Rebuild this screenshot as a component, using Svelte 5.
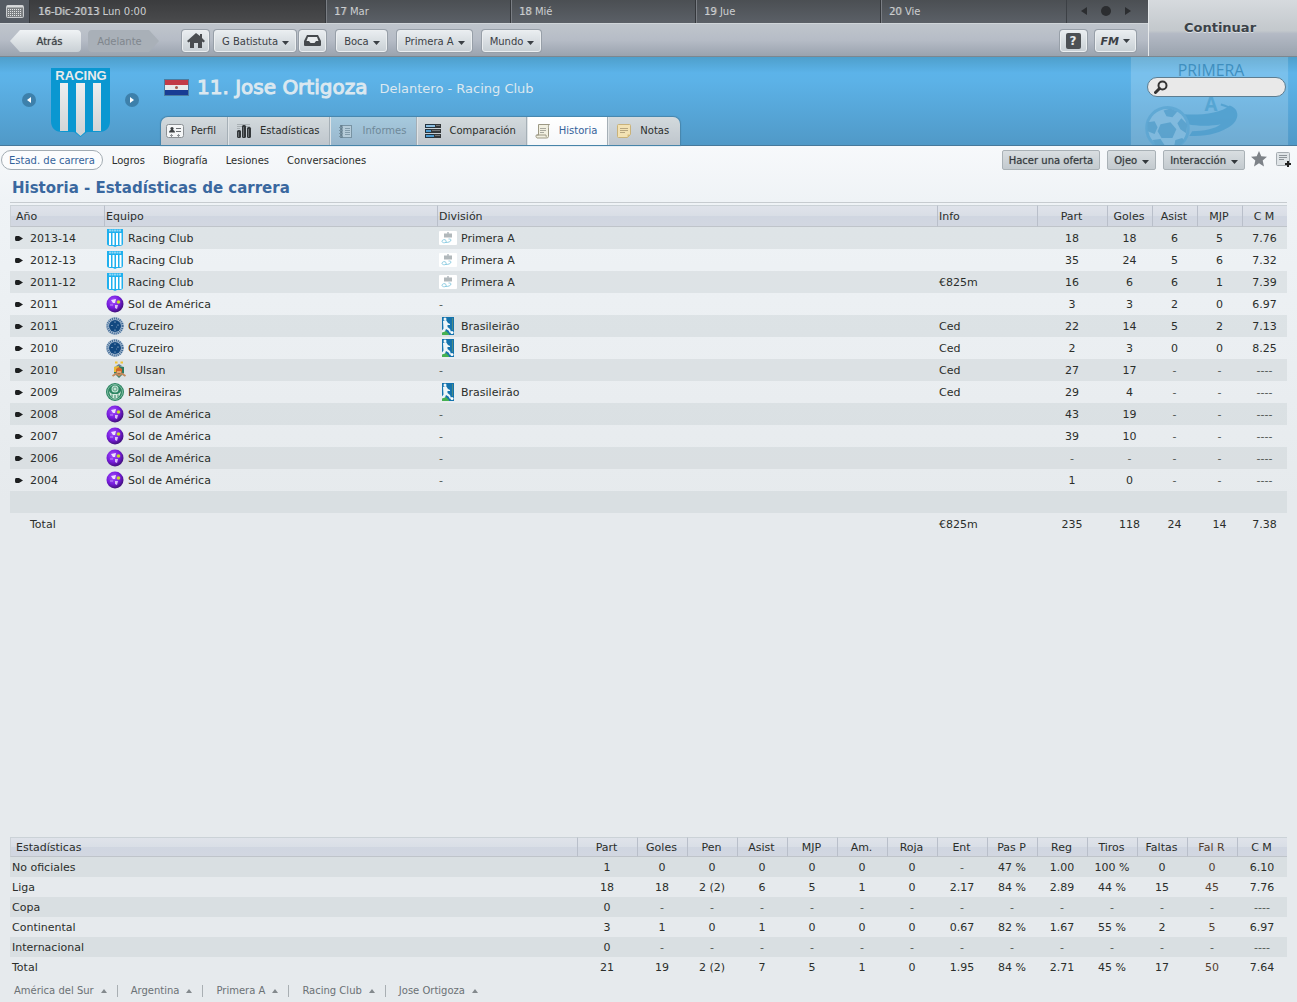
<script>
    let search = $state("");
    let activeTab = $state("Historia");
    let activeView = $state("Estad. de carrera");

    const days = [
        { day: "17", name: "Mar" },
        { day: "18", name: "Mié" },
        { day: "19", name: "Jue" },
        { day: "20", name: "Vie" },
    ];

    const menus = ["Boca", "Primera A", "Mundo"];

    const tabs = [
        { name: "Perfil", icon: "card" },
        { name: "Estadísticas", icon: "bars" },
        { name: "Informes", icon: "book", disabled: true },
        { name: "Comparación", icon: "compare" },
        { name: "Historia", icon: "scroll" },
        { name: "Notas", icon: "note" },
    ];

    const views = ["Estad. de carrera", "Logros", "Biografía", "Lesiones", "Conversaciones"];

    const seasons = [
        { year: "2013-14", team: "Racing Club", crest: "racing", division: "Primera A", info: "", stats: ["18", "18", "6", "5", "7.76"] },
        { year: "2012-13", team: "Racing Club", crest: "racing", division: "Primera A", info: "", stats: ["35", "24", "5", "6", "7.32"] },
        { year: "2011-12", team: "Racing Club", crest: "racing", division: "Primera A", info: "€825m", stats: ["16", "6", "6", "1", "7.39"] },
        { year: "2011", team: "Sol de América", crest: "sol", division: "-", info: "", stats: ["3", "3", "2", "0", "6.97"] },
        { year: "2011", team: "Cruzeiro", crest: "cruzeiro", division: "Brasileirão", info: "Ced", stats: ["22", "14", "5", "2", "7.13"] },
        { year: "2010", team: "Cruzeiro", crest: "cruzeiro", division: "Brasileirão", info: "Ced", stats: ["2", "3", "0", "0", "8.25"] },
        { year: "2010", team: "Ulsan", crest: "ulsan", division: "-", info: "Ced", stats: ["27", "17", "-", "-", "----"] },
        { year: "2009", team: "Palmeiras", crest: "palmeiras", division: "Brasileirão", info: "Ced", stats: ["29", "4", "-", "-", "----"] },
        { year: "2008", team: "Sol de América", crest: "sol", division: "-", info: "", stats: ["43", "19", "-", "-", "----"] },
        { year: "2007", team: "Sol de América", crest: "sol", division: "-", info: "", stats: ["39", "10", "-", "-", "----"] },
        { year: "2006", team: "Sol de América", crest: "sol", division: "-", info: "", stats: ["-", "-", "-", "-", "----"] },
        { year: "2004", team: "Sol de América", crest: "sol", division: "-", info: "", stats: ["1", "0", "-", "-", "----"] },
    ];
    const totals = ["235", "118", "24", "14", "7.38"];

    const statColumns = ["Part", "Goles", "Pen", "Asist", "MJP", "Am.", "Roja", "Ent", "Pas P", "Reg", "Tiros", "Faltas", "Fal R", "C M"];
    const competitions = [
        { name: "No oficiales", stats: ["1", "0", "0", "0", "0", "0", "0", "-", "47 %", "1.00", "100 %", "0", "0", "6.10"] },
        { name: "Liga", stats: ["18", "18", "2 (2)", "6", "5", "1", "0", "2.17", "84 %", "2.89", "44 %", "15", "45", "7.76"] },
        { name: "Copa", stats: ["0", "-", "-", "-", "-", "-", "-", "-", "-", "-", "-", "-", "-", "----"] },
        { name: "Continental", stats: ["3", "1", "0", "1", "0", "0", "0", "0.67", "82 %", "1.67", "55 %", "2", "5", "6.97"] },
        { name: "Internacional", stats: ["0", "-", "-", "-", "-", "-", "-", "-", "-", "-", "-", "-", "-", "----"] },
        { name: "Total", stats: ["21", "19", "2 (2)", "7", "5", "1", "0", "1.95", "84 %", "2.71", "45 %", "17", "50", "7.64"] },
    ];

    const crumbs = ["América del Sur", "Argentina", "Primera A", "Racing Club", "Jose Ortigoza"];

    const isDash = (value) => value.startsWith("-");
</script>

{#snippet caret()}
    <svg class="caret" width="7" height="4" viewBox="0 0 7 4" aria-hidden="true">
        <path d="M0 0h7L3.5 4z" fill="currentColor" />
    </svg>
{/snippet}

{#snippet tabIcon(name)}
    <svg class="tab-icon" width="18" height="16" viewBox="0 0 18 16" aria-hidden="true">
        {#if name === "card"}
            <rect x="0.5" y="1.5" width="17" height="13" rx="2" fill="#f4f6f7" stroke="#8b9094" />
            <circle cx="6" cy="5.6" r="1.6" fill="#3c4043" />
            <path d="M3 9.5c0-2 1.5-2.5 3-2.5s3 .5 3 2.5z" fill="#3c4043" />
            <path d="M10 5.5h5M10 8.5h5" stroke="#6b7074" />
            <path d="M5.5 11v3M12.5 11v3M4 12.5h3M11 12.5h3" stroke="#8f9498" />
        {:else if name === "bars"}
            <path d="M2 1.5h13M2 3.5h13M2 5.5h3" stroke="#a9b0b4" />
            <rect x="2" y="7" width="4" height="8" rx="1.5" fill="#33373a" />
            <rect x="7" y="2" width="4" height="13" rx="1.5" fill="#33373a" />
            <rect x="12" y="4" width="4" height="11" rx="1.5" fill="#33373a" />
            <path d="M3.5 9v5M8.5 4v10M13.5 6v8" stroke="#666b6f" />
        {:else if name === "book"}
            <rect x="3.5" y="2.5" width="11" height="12" fill="#b6ccd9" stroke="#7893a3" />
            <path d="M4.5 2v13" stroke="#67808f" stroke-width="2" />
            <path d="M2 4.5h4M2 7.5h4M2 10.5h4M2 13.5h4" stroke="#7893a3" />
            <path d="M8 5.5h5M8 7.5h5M8 9.5h5M8 11.5h5" stroke="#829cab" />
        {:else if name === "compare"}
            <g stroke="#24333f">
                <rect x="1.5" y="1.5" width="15" height="3" fill="#8cbfe2" />
                <rect x="1.5" y="6.5" width="15" height="3" fill="#4d9bd0" />
                <rect x="1.5" y="11.5" width="15" height="3" fill="#4d9bd0" />
            </g>
            <path d="M11 1h6v4h-6zM7 6h10v4H7zM10 11h7v4h-7z" fill="#34383b" />
            <path d="M12 2.5h4M8 7.5h8M11 12.5h5" stroke="#73787b" />
        {:else if name === "scroll"}
            <path d="M4.5 1.5h11c-1.5 1-1 2-1 3v9c0 1-1 1.5-2 1.5H3c-1-.5-1.5-2-.5-3h2z" fill="#f1efe0" stroke="#9c9884" />
            <path d="M2.5 12h9.5c0 1 .2 2 1 2.5" fill="none" stroke="#9c9884" />
            <path d="M6 5.5h6M6 7.5h6M6 9.5h4" stroke="#a8a89e" />
        {:else}
            <path d="M3.5 1.5h11a1 1 0 0 1 1 1v9l-3 3h-9a1 1 0 0 1-1-1v-11a1 1 0 0 1 1-1z" fill="#f3e2b4" stroke="#c9b27a" />
            <path d="M15 11.5h-2.5v3z" fill="#d9bd78" />
            <path d="M5 5.5h8M5 7.5h8M5 9.5h5" stroke="#b7a680" />
        {/if}
    </svg>
{/snippet}

{#snippet crestIcon(name)}
    <svg class="crest" class:wide={name === "ulsan"} width="18" height="18" viewBox="0 0 18 18" aria-hidden="true">
        {#if name === "racing"}
            <path d="M1 0h16v14.5c0 2-1.5 2.5-6 2.5l-2 1-2-1c-4.5 0-6-.5-6-2.5z" fill="#1fb0ee" />
            <path d="M3 4h2v12H3zM6.5 4h2v12h-2zM10 4h2v12h-2zM13.5 4h2v12h-2z" fill="#fff" />
            <path d="M3 1.5h12" stroke="#8fd8f7" stroke-width="2" stroke-dasharray="2 .5" />
        {:else if name === "sol"}
            <defs>
                <radialGradient id="solShade" cx="0.4" cy="0.35" r="0.65">
                    <stop offset="0" stop-color="#a550ff" />
                    <stop offset="0.6" stop-color="#761bdc" />
                    <stop offset="1" stop-color="#42107c" />
                </radialGradient>
            </defs>
            <circle cx="9" cy="9" r="8.5" fill="url(#solShade)" />
            <path d="M5 5l5-1-1 4-2 0z" fill="#efe2fd" />
            <path d="M9 10l3 0-1 4-2-1z" fill="#d9bff6" />
            <circle cx="12.5" cy="7" r="1.8" fill="#c9dc28" />
            <path d="M4 10h3" stroke="#c394f5" />
        {:else if name === "cruzeiro"}
            <circle cx="9" cy="9" r="9" fill="#a9bed3" />
            <circle cx="9" cy="9" r="7.5" fill="none" stroke="#3c6591" stroke-width="2" stroke-dasharray="1 1" />
            <circle cx="9" cy="9" r="6" fill="#124880" />
            <g fill="#d5e2ee">
                <circle cx="9" cy="5" r="0.6" />
                <circle cx="6" cy="8.5" r="0.6" />
                <circle cx="12" cy="8" r="0.6" />
                <circle cx="9" cy="13" r="0.6" />
                <circle cx="10.5" cy="10" r="0.4" />
            </g>
        {:else if name === "ulsan"}
            <path d="M5 1.5h2.5M10.5 1.5H13" stroke="#f2c335" stroke-width="2" />
            <path d="M9 3l3 2H6z" fill="#6d7d90" />
            <path d="M4 6l5-1 5 1v6l-5 5-5-5z" fill="#2d7a63" />
            <path d="M4 6l5-1v6H4z" fill="#e8b935" />
            <path d="M6 8l3-2 3 2v3l-3 2-3-2z" fill="#d0672b" />
            <path d="M2.5 15l4-2.5 2.5 2 2.5-2 4 2.5" fill="none" stroke="#c28a5c" stroke-width="2" />
            <path d="M7 11h4" stroke="#f6e7c8" />
        {:else}
            <circle cx="9" cy="9" r="9" fill="#2d8562" />
            <circle cx="9" cy="9" r="7.5" fill="none" stroke="#7dbba0" />
            <circle cx="9" cy="6" r="3.5" fill="#c4e2d4" />
            <circle cx="9" cy="6" r="2" fill="none" stroke="#5ea486" />
            <path d="M3 8c1 6 3.5 7.5 6 7.5S14 14 15 8c-2 3.5-4 3-6 3S5 11.5 3 8z" fill="#d6eade" />
            <path d="M6 11.5v3M9 12v3M12 11.5v3" stroke="#2d8562" />
        {/if}
    </svg>
{/snippet}

{#snippet divisionIcon(name)}
    <svg class="crest" width="18" height="18" viewBox="0 0 18 18" aria-hidden="true">
        {#if name === "Primera A"}
            <rect y="2" width="18" height="14" rx="1" fill="#fff" />
            <path d="M9 3v2" stroke="#8b979e" />
            <path d="M5 5.5h8M5 7.5h8" stroke="#b1b8bb" stroke-width="2" />
            <path d="M3 12.5c0-2 3-2.5 4-1s-1 2.5-2.5 2.2S3 12.5 3 12.5zM6 13.5c3 .2 6-.8 6-2.5 0-.8-1-1-2.5-1" fill="none" stroke="#8fcde2" />
        {:else}
            <rect x="3" width="12" height="18" fill="#1473ad" />
            <path d="M3 18v-3l4-1 3 3v1z" fill="#46b052" />
            <circle cx="6" cy="2" r="1.5" fill="#eef6f8" />
            <path d="M4 4l3-1 2 3 2 1v1H8.500v2l2.500 2 1 3-1 1-1.500-2.500L7 12l-1 2.500-3 1v-2l1.500-2z" fill="#eef6f8" />
            <path d="M13.5 1v12" stroke="#4d8a84" />
            <circle cx="13" cy="15.5" r="1.5" fill="#fff" />
        {/if}
    </svg>
{/snippet}

<div class="screen">
    <header class="top">
        <div class="top-left">
            <div class="calendar">
                <button class="cal-icon" aria-label="Calendario">
                    <svg width="18" height="13" viewBox="0 0 18 13">
                        <rect x="0.5" y="0.5" width="17" height="12" rx="1" fill="#7d8184" stroke="#c9cccf" />
                        <path d="M1 1.5h16" stroke="#d8dadc" stroke-width="2" />
                        <path d="M2 4.5h14M2 6.5h14M2 8.5h14M2 10.5h14" stroke="#e4e6e7" stroke-dasharray="1 1" />
                    </svg>
                </button>
                <div class="day today"><b>16-Dic-2013</b> Lun 0:00</div>
                {#each days as d}
                    <div class="day"><b>{d.day}</b> {d.name}</div>
                {/each}
                <div class="cal-nav">
                    <button aria-label="Anterior">
                        <svg width="6" height="8" viewBox="0 0 6 8"><path d="M6 0v8L0 4z" fill="#2b2d30" /></svg>
                    </button>
                    <button aria-label="Hoy">
                        <svg width="10" height="10" viewBox="0 0 10 10"><circle cx="5" cy="5" r="5" fill="#2b2d30" /></svg>
                    </button>
                    <button aria-label="Siguiente">
                        <svg width="6" height="8" viewBox="0 0 6 8"><path d="M0 0v8l6-4z" fill="#2b2d30" /></svg>
                    </button>
                </div>
            </div>
            <nav class="toolbar">
                <button class="arrow back">Atrás</button>
                <button class="arrow forward" disabled>Adelante</button>
                <button class="btn square home" aria-label="Inicio">
                    <svg width="18" height="16" viewBox="0 0 18 16">
                        <path d="M9 0L0 8l1.5 1.5L3 8.5V15h4v-5h4v5h4V8.5l1.5 1L18 8l-3-3V1h-2v2z" fill="#4a4d51" />
                    </svg>
                </button>
                <button class="btn manager" aria-haspopup="menu">G Batistuta {@render caret()}</button>
                <button class="btn square inbox" aria-label="Bandeja de entrada">
                    <svg width="17" height="12" viewBox="0 0 17 12">
                        <path d="M3 0h11l3 6v4a1 1 0 0 1-1 1H1a1 1 0 0 1-1-1V6z" fill="#45494d" />
                        <path d="M4 2h9l1.5 4H12l-1.5 2h-4L5 6H2.5z" fill="#e8ebed" />
                    </svg>
                </button>
                {#each menus as menu}
                    <button class="btn menu" aria-haspopup="menu">{menu} {@render caret()}</button>
                {/each}
                <span class="spacer"></span>
                <button class="btn square help" aria-label="Ayuda">
                    <span class="question">?</span>
                </button>
                <button class="btn fm" aria-haspopup="menu"><i>FM</i> {@render caret()}</button>
            </nav>
        </div>
        <button class="continue">Continuar</button>
    </header>

    <section class="banner">
        <svg class="watermark" width="159" height="89" viewBox="0 0 159 89" aria-hidden="true">
            <rect width="159" height="89" fill="#fff" opacity="0.18" />
            <text x="81" y="19" text-anchor="middle" font-family="Open Sans, sans-serif" font-size="16" fill="#3f8fbf">PRIMERA</text>
            <g opacity="0.75">
                <text x="81" y="55" text-anchor="middle" font-family="Open Sans, sans-serif" font-weight="bold" font-size="19" fill="#4c9fce">A</text>
                <path d="M53 58c18 1 38-1 47-9 12 4 9 18-3 23-10 6-22 8-38 8l3-5c12 0 22-2 29-7-10 2-24 2-33 0z" fill="#4a9ccc" />
                <path d="M91 48c12 3 16 8 14 14" fill="none" stroke="#4a9ccc" stroke-width="2" />
                <circle cx="37" cy="72" r="21" fill="#86bde0" stroke="#5aa5d2" stroke-width="3" />
                <g fill="#559fcb">
                    <path d="M30 68l10-2 6 7-4 9H31l-4-7z" />
                    <path d="M33 54l7-2 7 3-5 6-6-1zM17 66l7-1 3 6-3 7-7-3zM51 62l6 6-1 9-6-4-3-6z" />
                    <path d="M22 84l8-1 4 6h-9zM45 84l7-2 2 3-4 4h-6z" />
                </g>
            </g>
        </svg>
        <div class="badge-area">
            <button class="round" aria-label="Jugador anterior">
                <svg width="4" height="6" viewBox="0 0 4 6"><path d="M4 0v6L0 3z" fill="#fff" /></svg>
            </button>
            <svg class="shield" width="59" height="70" viewBox="0 0 59 70" role="img" aria-label="Racing Club">
                <defs>
                    <linearGradient id="stripe" x1="0" y1="0" x2="0" y2="1">
                        <stop offset="0" stop-color="#eeeff0" />
                        <stop offset="1" stop-color="#cfd2d4" />
                    </linearGradient>
                </defs>
                <path d="M0 0h59v53c0 8-5 11-12 11H37c-2 0-4 2-7.5 5C26 66 24 64 22 64H12C5 64 0 61 0 53z" fill="#0a97d1" />
                <path d="M9 15h8v48H9zM42 15h8v48h-8zM25 15h9v49l-4.5 4L25 64z" fill="url(#stripe)" />
                <text x="30" y="12" text-anchor="middle" font-family="Liberation Sans, sans-serif" font-weight="bold" font-size="13" fill="#e9ebec">RACING</text>
            </svg>
            <button class="round" aria-label="Jugador siguiente">
                <svg width="4" height="6" viewBox="0 0 4 6"><path d="M0 0v6l4-3z" fill="#fff" /></svg>
            </button>
        </div>
        <div class="player">
            <div class="player-name">
                <svg width="25" height="17" viewBox="0 0 25 17" role="img" aria-label="Paraguay">
                    <rect width="25" height="17" fill="#4b7ba0" />
                    <rect x="1" y="1" width="23" height="5" fill="#c23a48" />
                    <rect x="1" y="6" width="23" height="5" fill="#e8eaec" />
                    <rect x="1" y="11" width="23" height="5" fill="#183c94" />
                    <circle cx="12.5" cy="8.5" r="1.5" fill="#a35b4e" />
                </svg>
                <h1>11. Jose Ortigoza</h1>
                <span>Delantero - Racing Club</span>
            </div>
            <div class="tabs" role="tablist">
                {#each tabs as tab}
                    <button
                        class="tab"
                        role="tab"
                        class:active={tab.name === activeTab}
                        aria-selected={tab.name === activeTab}
                        disabled={tab.disabled}
                        onclick={() => (activeTab = tab.name)}
                    >
                        {@render tabIcon(tab.icon)}
                        {tab.name}
                    </button>
                {/each}
            </div>
        </div>
        <label class="search">
            <svg width="14" height="14" viewBox="0 0 14 14" aria-hidden="true">
                <circle cx="8.5" cy="5.5" r="4" fill="none" stroke="#333" stroke-width="2" />
                <path d="M5.5 8.5L1.5 12.5" stroke="#333" stroke-width="3" stroke-linecap="round" />
            </svg>
            <input type="text" aria-label="Buscar" bind:value={search} />
        </label>
    </section>

    <main>
        <div class="subnav">
            {#each views as view}
                <button class="view" class:active={view === activeView} onclick={() => (activeView = view)}>{view}</button>
            {/each}
            <span class="spacer"></span>
            <div class="actions">
                <button class="action">Hacer una oferta</button>
                <button class="action" aria-haspopup="menu">Ojeo {@render caret()}</button>
                <button class="action" aria-haspopup="menu">Interacción {@render caret()}</button>
                <button class="plain" aria-label="Favorito">
                    <svg width="16" height="16" viewBox="0 0 16 16">
                        <path d="M8 0l2.3 5.2 5.7.5-4.3 3.8L13 15.5l-5-3.2-5 3.2 1.3-6L0 5.7l5.7-.5z" fill="#7d8288" />
                    </svg>
                </button>
                <button class="plain note-add" aria-label="Añadir nota">
                    <svg width="16" height="16" viewBox="0 0 16 16">
                        <rect x="0.5" y="0.5" width="13" height="13" rx="1" fill="#dfe4e7" stroke="#a5acb1" />
                        <path d="M3 3.5h8M3 5.5h8M3 7.5h5" stroke="#8c9398" />
                        <path d="M12 9v6M9 12h6" stroke="#222" stroke-width="2" />
                    </svg>
                </button>
            </div>
        </div>

        <h2>Historia - Estadísticas de carrera</h2>

        <table class="history">
            <colgroup>
                <col class="c-year" />
                <col class="c-team" />
                <col />
                <col class="c-info" />
                <col class="c-part" />
                <col class="c-num" />
                <col class="c-num" />
                <col class="c-num" />
                <col class="c-num" />
            </colgroup>
            <thead>
                <tr>
                    <th class="first">Año</th>
                    <th>Equipo</th>
                    <th>División</th>
                    <th>Info</th>
                    <th class="num">Part</th>
                    <th class="num">Goles</th>
                    <th class="num">Asist</th>
                    <th class="num">MJP</th>
                    <th class="num">C M</th>
                </tr>
            </thead>
            <tbody>
                {#each seasons as season}
                    <tr>
                        <td>
                            <div class="cell year">
                                <svg width="8" height="5" viewBox="0 0 8 5" aria-hidden="true">
                                    <path d="M1 0h3l4 2.5L4 5H1C-.3 5-.3 0 1 0z" fill="#1d1f20" />
                                </svg>
                                {season.year}
                            </div>
                        </td>
                        <td><div class="cell">{@render crestIcon(season.crest)}{season.team}</div></td>
                        <td>
                            {#if isDash(season.division)}
                                <span class="dash">-</span>
                            {:else}
                                <div class="cell">{@render divisionIcon(season.division)}{season.division}</div>
                            {/if}
                        </td>
                        <td>{season.info}</td>
                        {#each season.stats as value}
                            <td class="num" class:dash={isDash(value)}>{value}</td>
                        {/each}
                    </tr>
                {/each}
                <tr><td colspan="9"></td></tr>
                <tr>
                    <td class="total">Total</td>
                    <td></td>
                    <td></td>
                    <td>€825m</td>
                    {#each totals as value}
                        <td class="num">{value}</td>
                    {/each}
                </tr>
            </tbody>
        </table>

        <table class="summary">
            <colgroup>
                <col />
                <col class="s-part" />
                {#each statColumns.slice(1) as _}
                    <col class="s-num" />
                {/each}
            </colgroup>
            <thead>
                <tr>
                    <th class="first">Estadísticas</th>
                    {#each statColumns as column}
                        <th class="num" class:fouls={column === "Fal R"}>{column}</th>
                    {/each}
                </tr>
            </thead>
            <tbody>
                {#each competitions as row}
                    <tr>
                        <td>{row.name}</td>
                        {#each row.stats as value, i}
                            <td class="num" class:dash={isDash(value)} class:fouls={i === 12 && !isDash(value)}>{value}</td>
                        {/each}
                    </tr>
                {/each}
            </tbody>
        </table>
    </main>

    <footer>
        {#each crumbs as crumb}
            <button class="crumb">
                {crumb}
                <svg width="6" height="4" viewBox="0 0 6 4" aria-hidden="true"><path d="M3 0l3 4H0z" fill="#83898d" /></svg>
            </button>
        {/each}
    </footer>
</div>

<style>
    :global(body) {
        margin: 0;
        background: #e6eaed;
    }

    .screen {
        min-height: 100vh;
        display: flex;
        flex-direction: column;
        font-family: "DejaVu Sans", Verdana, sans-serif;
        font-size: 11px;
        color: #2b2e2b;
        background: linear-gradient(#f7f9fb 146px, #eff3f6 200px, #e6eaed 500px);
    }

    button {
        font-family: inherit;
        font-size: 10px;
        color: inherit;
        padding: 0;
        border: none;
        background: none;
        cursor: pointer;
        white-space: nowrap;
    }

    .spacer {
        flex: 1;
    }

    /* Calendar strip and toolbar */
    .top {
        display: flex;
        height: 57px;
        border-bottom: 1px solid #7b8790;
        box-sizing: border-box;
    }

    .top-left {
        flex: 1;
        display: flex;
        flex-direction: column;
    }

    .calendar {
        display: flex;
        height: 23px;
        background: linear-gradient(#4b4f53, #5b6067);
        font-size: 10px;
        color: #cdcfd1;
    }

    .cal-icon {
        width: 30px;
        flex: none;
        display: flex;
        align-items: center;
        justify-content: center;
        background: #555b63;
    }

    .day {
        flex: 185 1 185px;
        box-sizing: border-box;
        padding-left: 7px;
        line-height: 23px;
        border-left: 1px solid #7a7e84;
        box-shadow: -1px 0 #34373b;
        white-space: nowrap;
    }

    .day b {
        font-weight: normal;
        text-shadow: 1px 0 #8b8d8f;
    }

    .day.today {
        flex: 296 1 296px;
        padding-left: 8px;
        border-left: none;
        background: linear-gradient(#3b3c3e, #4a4b4d);
    }

    .cal-nav {
        width: 82px;
        flex: none;
        display: flex;
        align-items: center;
        justify-content: center;
        gap: 14px;
        padding: 0 4px 2px 0;
        box-sizing: border-box;
        border-left: 1px solid #3c4045;
    }

    .cal-nav button {
        display: flex;
    }

    .toolbar {
        flex: 1;
        display: flex;
        align-items: center;
        padding: 2px 12px 0 10px;
        border-top: 1px solid #d0d5d9;
        background: linear-gradient(#bfc5cc, #b6bcc6 50%, #9aa3ae);
    }

    .btn,
    .arrow {
        height: 22px;
        display: flex;
        align-items: center;
        justify-content: center;
        box-sizing: border-box;
        color: #3b4045;
    }

    .btn {
        gap: 4px;
        padding: 0 6px 0 7px;
        border: 1px solid #eceff1;
        border-radius: 3px;
        background: linear-gradient(#e9edf0, #c9d0d5);
        box-shadow: 0 0 0 1px #979fa8;
    }

    .btn .caret {
        margin-top: 3px;
    }

    .square {
        width: 27px;
        padding: 0;
    }

    .home {
        margin-left: 23px;
    }

    .manager {
        margin-left: 5px;
    }

    .inbox {
        margin-left: 3px;
    }

    .menu {
        margin-left: 10px;
    }

    .arrow {
        width: 71px;
        background: linear-gradient(#f0f3f5, #c9d0d5);
        text-shadow: 0 0 1px #6c7074;
    }

    .back {
        padding-left: 8px;
        border-radius: 0 4px 4px 0;
        clip-path: polygon(0 50%, 14% 0, 98% 0, 100% 10%, 100% 90%, 98% 100%, 14% 100%);
    }

    .forward {
        margin-left: 7px;
        padding-right: 8px;
        color: #80868d;
        text-shadow: none;
        border-radius: 4px 0 0 4px;
        background: #a9b0b8;
        clip-path: polygon(0 10%, 2% 0, 86% 0, 100% 50%, 86% 100%, 2% 100%, 0 90%);
    }

    .question {
        width: 15px;
        height: 16px;
        border-radius: 2px;
        background: #4d5155;
        color: #e8eaeb;
        font-size: 12px;
        line-height: 16px;
        font-weight: bold;
    }

    .fm {
        margin-left: 8px;
        padding: 0 5px;
    }

    .fm i {
        font-size: 11px;
        font-weight: bold;
    }

    .fm .caret {
        margin-top: 0;
    }

    .continue {
        width: 149px;
        padding: 0 6px 2px 0;
        border-left: 1px solid #e6e9eb;
        background: linear-gradient(#d6dade, #c3c8cc 55%, #b4bac5 60%, #9aa3ae);
        color: #3b4248;
        font-size: 13px;
        font-weight: bold;
        text-shadow: 0 1px #dde1e5;
    }

    /* Player banner */
    .banner {
        position: relative;
        display: flex;
        height: 89px;
        box-sizing: border-box;
        border-bottom: 1px solid #47799b;
        background: linear-gradient(#4e9fcb, #5cb3e9 16px, #5cb2e7 24px, #5099c7);
    }

    .watermark {
        position: absolute;
        top: 0;
        right: 8px;
        height: 100%;
    }

    .badge-area {
        width: 161px;
        display: flex;
        justify-content: center;
        align-items: center;
        gap: 15px;
        flex: none;
        box-sizing: border-box;
        padding-top: 3px;
    }

    .round {
        width: 14px;
        height: 14px;
        margin-top: -6px;
        border-radius: 50%;
        display: flex;
        align-items: center;
        justify-content: center;
        background: #3d80ab;
    }

    .player {
        flex: 1;
        display: flex;
        flex-direction: column;
        justify-content: space-between;
    }

    .player-name {
        display: flex;
        align-items: center;
        padding: 18px 0 0 3px;
        color: #dbe8f0;
    }

    h1 {
        margin: 0 12px 0 8px;
        font-size: 20px;
        line-height: 24px;
        font-weight: normal;
        -webkit-text-stroke: 1px #dbe8f0;
    }

    .player-name span {
        font-size: 13px;
        margin-top: 2px;
    }

    .tabs {
        display: flex;
        align-self: flex-start;
        height: 28px;
        border-radius: 7px 7px 0 0;
        overflow: hidden;
        box-shadow: 0 0 1px 1px #4785ab;
    }

    .tab {
        display: flex;
        align-items: center;
        gap: 7px;
        padding: 0 11px 1px 6px;
        border-left: 1px solid #dfe4e7;
        box-shadow: -1px 0 #a5afb6;
        background: linear-gradient(#d3dadd, #bfc6cd);
    }

    .tab:first-child {
        padding: 0 12px 1px 5px;
        border-left: none;
    }

    .tab:disabled {
        color: #6f8999;
        background: linear-gradient(#a6cade, #98b6cc);
    }

    .tab.active {
        color: #34629a;
        background: linear-gradient(#fff, #f5f7f9);
    }

    .search {
        position: relative;
        width: 139px;
        height: 20px;
        margin: 20px 11px 0 0;
        box-sizing: border-box;
        display: flex;
        align-items: center;
        gap: 4px;
        padding: 0 8px 0 6px;
        border: 1px solid #5d7d91;
        border-radius: 10px;
        background: #e9e9e9;
    }

    .search input {
        flex: 1;
        min-width: 0;
        border: none;
        outline: none;
        background: none;
        font: inherit;
    }

    /* Page body */
    main {
        flex: 1;
        display: flex;
        flex-direction: column;
        padding: 0 10px;
    }

    .subnav {
        display: flex;
        align-items: center;
        height: 28px;
        margin: 0 -5px 0 -9px;
    }

    .view {
        height: 20px;
        box-sizing: border-box;
        padding: 0;
        margin-right: 18px;
        border-radius: 10px;
    }

    .view.active {
        padding: 0 7px;
        margin-right: 9px;
        color: #34629a;
        border: 1px solid #a3acb3;
        background: #fbfcfd;
    }

    .actions {
        display: flex;
        align-items: center;
        gap: 7px;
    }

    .action {
        height: 20px;
        display: flex;
        align-items: center;
        gap: 5px;
        padding: 0 6px;
        border: 1px solid #a9b1b6;
        border-radius: 2px;
        box-sizing: border-box;
        background: linear-gradient(#d9dee1, #c3cacf);
        color: #33383c;
        text-shadow: 0 0 1px #7d8286;
    }

    .action .caret {
        margin-top: 3px;
    }

    .plain {
        display: flex;
        margin-left: -1px;
        margin-top: -3px;
    }

    .note-add {
        margin-left: 2px;
        margin-top: 0;
    }

    h2 {
        margin: 0;
        padding: 2px 2px 0;
        height: 26px;
        line-height: 24px;
        font-size: 15px;
        color: #3a689f;
        border-bottom: 1px solid #c6cbcf;
    }

    table {
        width: 100%;
        table-layout: fixed;
        border-collapse: separate;
        border-spacing: 0;
    }

    .history {
        margin: 2px 0 24px;
    }

    .summary {
        margin-top: auto;
    }

    .c-year {
        width: 94px;
    }

    .c-team {
        width: 333px;
    }

    .c-info {
        width: 100px;
    }

    .c-part {
        width: 70px;
    }

    .c-num {
        width: 45px;
    }

    .s-part {
        width: 60px;
    }

    .s-num {
        width: 50px;
    }

    th,
    td {
        height: 22px;
        padding: 0 0 0 2px;
        box-sizing: border-box;
        text-align: left;
        white-space: nowrap;
    }

    .summary th,
    .summary td {
        height: 20px;
    }

    th {
        font-weight: normal;
        border-top: 1px solid #cbd2d7;
        border-bottom: 1px solid #bfc4ca;
        border-left: 1px solid #b9bfca;
        padding-left: 1px;
        background: linear-gradient(#dfe3ea, #d9dee6 50%, #d0d6e1 50%, #d2d7e1);
    }

    th.first {
        padding-left: 5px;
        border-left-color: #ccd2d8;
    }

    tbody tr:nth-child(odd) {
        background: rgba(190, 199, 204, 0.33);
    }

    th.num {
        text-align: center;
        padding: 0 2px 0 0;
    }

    td.num {
        text-align: center;
        padding: 0;
    }

    .num.dash,
    .dash {
        color: #525754;
    }

    .fouls {
        color: #55402f;
    }

    .cell {
        display: flex;
        align-items: center;
        gap: 4px;
    }

    .cell.year {
        gap: 7px;
        padding-left: 3px;
    }

    .crest.wide {
        margin: 0 3px 0 4px;
    }

    td.total {
        padding-left: 20px;
    }

    footer {
        display: flex;
        align-items: center;
        height: 25px;
        padding: 2px 1px 0;
        box-sizing: border-box;
    }

    .crumb {
        display: flex;
        align-items: center;
        gap: 7px;
        height: 12px;
        padding: 0 10px 0 13px;
        color: #6b7175;
        border-left: 1px solid #a9afb3;
    }

    .crumb:first-child {
        border-left: none;
    }
</style>
